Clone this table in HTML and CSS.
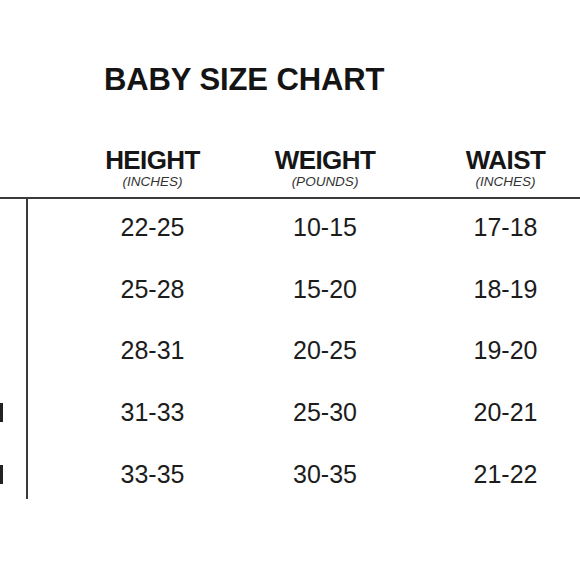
FILE: index.html
```html
<!DOCTYPE html>
<html lang="en">
<head>
<meta charset="utf-8">
<title>Baby Size Chart</title>
<link rel="stylesheet" href="styles.css">
</head>
<body>
<main class="chart">
  <h1 class="title">BABY SIZE CHART</h1>
  <div class="head">
    <div class="col-head"><div class="label">HEIGHT</div><div class="unit">(INCHES)</div></div>
    <div class="col-head"><div class="label">WEIGHT</div><div class="unit">(POUNDS)</div></div>
    <div class="col-head"><div class="label">WAIST</div><div class="unit">(INCHES)</div></div>
  </div>
  <div class="body">
    <div class="side">
      <span class="mark-slot"></span>
      <span class="mark-slot"></span>
      <span class="mark-slot"></span>
      <span class="mark-slot"><span class="mark"></span></span>
      <span class="mark-slot"><span class="mark"></span></span>
    </div>
    <div class="rows">
      <div class="cell">22-25</div><div class="cell">10-15</div><div class="cell">17-18</div>
      <div class="cell">25-28</div><div class="cell">15-20</div><div class="cell">18-19</div>
      <div class="cell">28-31</div><div class="cell">20-25</div><div class="cell">19-20</div>
      <div class="cell">31-33</div><div class="cell">25-30</div><div class="cell">20-21</div>
      <div class="cell">33-35</div><div class="cell">30-35</div><div class="cell">21-22</div>
    </div>
  </div>
</main>
</body>
</html>
```

FILE: styles.css
```css
html, body {
  margin: 0;
  padding: 0;
  background: #ffffff;
  overflow: hidden;
}

body {
  font-family: "Liberation Sans", Arial, sans-serif;
  color: #1c1c1c;
}

.chart {
  width: 580px;
  overflow: hidden;
}

.title {
  margin: 0;
  padding: 64px 0 0 104px;
  font-size: 31px;
  line-height: 31px;
  font-weight: 700;
  color: #141414;
  letter-spacing: -0.1px;
}

.head {
  margin-top: 51.6px;
  padding: 0 0 8.7px 66px;
  display: grid;
  grid-template-columns: 173px 172px 189px;
  border-bottom: 2px solid #3a3a3a;
}

.col-head {
  text-align: center;
}

.label {
  font-size: 26px;
  line-height: 26px;
  font-weight: 700;
  letter-spacing: -0.6px;
  color: #161616;
}

.unit {
  margin-top: 2.7px;
  font-size: 13.5px;
  line-height: 13px;
  font-style: italic;
  color: #333333;
}

.body {
  display: flex;
  height: 300px;
}

.side {
  flex: 0 0 26px;
  border-right: 2px solid #3a3a3a;
  display: grid;
  grid-template-rows: repeat(5, 25px);
  row-gap: 36.6px;
  padding-top: 16.3px;
  align-content: start;
}

.mark-slot {
  display: block;
}

.mark {
  display: block;
  width: 2.5px;
  height: 19px;
  margin-top: 3px;
  background: #222222;
}

.rows {
  flex: 0 0 auto;
  display: grid;
  grid-template-columns: 173px 172px 189px;
  grid-auto-rows: 25px;
  row-gap: 36.6px;
  padding: 16.3px 0 0 38px;
  align-content: start;
}

.cell {
  text-align: center;
  font-size: 25px;
  line-height: 25px;
  color: #1c1c1c;
}
```
